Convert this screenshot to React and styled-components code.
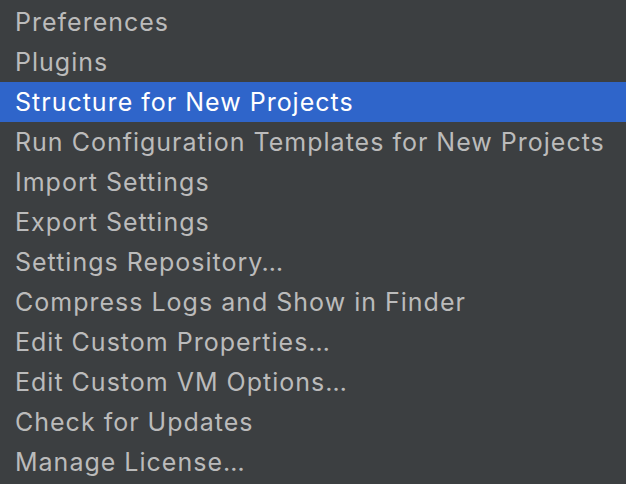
import React from "react";
import styled, { createGlobalStyle } from "styled-components";

const Global = createGlobalStyle`
  html, body { margin: 0; padding: 0; background: #3c3f41; }
  body { width: 626px; height: 484px; overflow: hidden; }
`;

const Menu = styled.ul`
  list-style: none;
  margin: 0;
  padding: 2px 0 0;
  background: #3c3f41;
  width: 626px;
  height: 484px;
  box-sizing: border-box;
`;

const Item = styled.li`
  height: 40px;
  display: flex;
  align-items: center;
  padding-left: 15px;
  font-family: Inter, "Noto Sans", sans-serif;
  font-size: 25px;
  letter-spacing: 1px;
  color: ${(p) => (p.$selected ? "#ffffff" : "#bbbbbb")};
  background: ${(p) => (p.$selected ? "#2f65ca" : "transparent")};
  white-space: nowrap;
`;

const items = [
  "Preferences",
  "Plugins",
  "Structure for New Projects",
  "Run Configuration Templates for New Projects",
  "Import Settings",
  "Export Settings",
  "Settings Repository…",
  "Compress Logs and Show in Finder",
  "Edit Custom Properties…",
  "Edit Custom VM Options…",
  "Check for Updates",
  "Manage License…",
];

export default function App() {
  return (
    <>
      <Global />
      <Menu>
        {items.map((t, i) => (
          <Item key={t} $selected={i === 2}>
            {t}
          </Item>
        ))}
      </Menu>
    </>
  );
}
